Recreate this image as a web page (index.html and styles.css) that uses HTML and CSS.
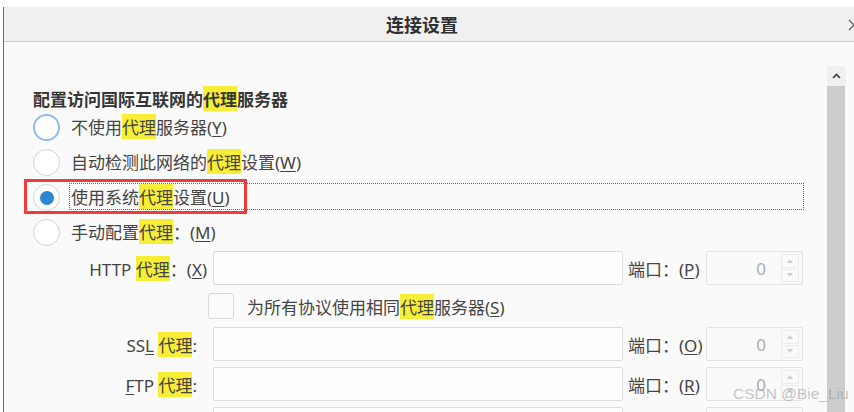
FILE: index.html
```html
<!DOCTYPE html>
<html lang="zh-CN">
<head>
<meta charset="utf-8">
<title>连接设置</title>
<link rel="stylesheet" href="styles.css">
</head>
<body>
<div class="window">
  <div class="titlebar">
    <div class="title">连接设置</div>
    <svg class="close" width="7" height="12" viewBox="0 0 7 12"><path d="M1 1 L6 6 L1 11" fill="none" stroke="#555" stroke-width="1.2"/></svg>
  </div>
  <div class="content">
    <div class="main">
      <div class="heading">配置访问国际互联网的<mark>代理</mark>服务器</div>
      <div class="radio-row">
        <span class="radio radio-focus"></span>
        <span class="rlabel">不使用<mark>代理</mark>服务器(<u>Y</u>)</span>
      </div>
      <div class="radio-row">
        <span class="radio"></span>
        <span class="rlabel">自动检测此网络的<mark>代理</mark>设置(<u>W</u>)</span>
      </div>
      <div class="radio-row">
        <span class="radio checked"></span>
        <span class="rlabel focus-ring">使用系统<mark>代理</mark>设置(<u>U</u>)</span>
        <div class="annot"></div>
      </div>
      <div class="radio-row">
        <span class="radio"></span>
        <span class="rlabel">手动配置<mark>代理</mark>：(<u>M</u>)</span>
      </div>

      <div class="field-row first">
        <span class="flabel">HTTP <mark>代理</mark>：(<u>X</u>)</span>
        <span class="input"></span>
        <span class="plabel">端口：(<u>P</u>)</span>
        <span class="port"><span class="val">0</span><span class="spin"><span class="spin-btn"><svg width="6" height="4" viewBox="0 0 6 4"><path d="M0 4 L3 0 L6 4Z" fill="#cfcfcf"/></svg></span><span class="spin-btn"><svg width="6" height="4" viewBox="0 0 6 4"><path d="M0 0 L3 4 L6 0Z" fill="#cfcfcf"/></svg></span></span></span>
      </div>
      <div class="check-row">
        <span class="checkbox"></span>
        <span class="clabel">为所有协议使用相同<mark>代理</mark>服务器(<u>S</u>)</span>
      </div>
      <div class="field-row">
        <span class="flabel short">SS<u>L</u> <mark>代理</mark>:</span>
        <span class="input"></span>
        <span class="plabel">端口：(<u>O</u>)</span>
        <span class="port"><span class="val">0</span><span class="spin"><span class="spin-btn"><svg width="6" height="4" viewBox="0 0 6 4"><path d="M0 4 L3 0 L6 4Z" fill="#cfcfcf"/></svg></span><span class="spin-btn"><svg width="6" height="4" viewBox="0 0 6 4"><path d="M0 0 L3 4 L6 0Z" fill="#cfcfcf"/></svg></span></span></span>
      </div>
      <div class="field-row">
        <span class="flabel short"><u>F</u>TP <mark>代理</mark>:</span>
        <span class="input"></span>
        <span class="plabel">端口：(<u>R</u>)</span>
        <span class="port"><span class="val">0</span><span class="spin"><span class="spin-btn"><svg width="6" height="4" viewBox="0 0 6 4"><path d="M0 4 L3 0 L6 4Z" fill="#cfcfcf"/></svg></span><span class="spin-btn"><svg width="6" height="4" viewBox="0 0 6 4"><path d="M0 0 L3 4 L6 0Z" fill="#cfcfcf"/></svg></span></span></span>
      </div>
      <div class="field-row">
        <span class="flabel short"></span>
        <span class="input"></span>
        <span class="plabel"></span>
        <span class="port"></span>
      </div>
    </div>
    <div class="scrollbar">
      <div class="sb-up"><svg width="9" height="6" viewBox="0 0 9 6"><path d="M1 5 L4.5 1.5 L8 5" fill="none" stroke="#3c3c3c" stroke-width="1.6"/></svg></div>
      <div class="sb-thumb"></div>
    </div>
  </div>
</div>
<div class="watermark">CSDN @Bie_Liu</div>
</body>
</html>
```
FILE: styles.css
```css
html, body {
  margin: 0;
  height: 412px;
  overflow: hidden;
  background: #ffffff;
}
body {
  font-family: "Noto Sans", "Noto Sans CJK SC", sans-serif;
  color: #444444;
  position: relative;
}
.window {
  margin: 7px 0 0 3px;
  border-left: 1px solid #707070;
  height: 405px;
  display: flex;
  flex-direction: column;
  background: #fafafa;
}
.titlebar {
  height: 34px;
  flex: none;
  background: #f0f0f0;
  border-bottom: 1px solid #cbcbcb;
  display: flex;
  align-items: center;
  overflow: hidden;
}
.title {
  flex: 1;
  text-align: center;
  font-family: "Noto Sans CJK SC", sans-serif;
  font-weight: bold;
  font-size: 18px;
  color: #2f2f2f;
  padding-right: 8px;
}
.close {
  flex: none;
  margin-right: -1px;
  margin-top: 2px;
}
.content {
  flex: 1;
  display: flex;
  min-height: 0;
}
.main {
  width: 823px;
  flex: none;
  box-sizing: border-box;
  padding: 46px 24px 0 29px;
  overflow: hidden;
}
.scrollbar {
  width: 19px;
  flex: none;
  margin-top: 24px;
  display: flex;
  flex-direction: column;
}
.sb-up {
  height: 20px;
  background: #f0f0f0;
  display: flex;
  align-items: center;
  justify-content: center;
}
.sb-thumb {
  flex: 1;
  background: #cdcdcd;
  margin-right: 1px;
}
mark {
  background: #f8ee35;
  color: inherit;
  font-family: "Noto Sans CJK SC", sans-serif;
}
u {
  text-underline-offset: 2px;
  text-decoration-thickness: 1px;
}
.heading {
  font-size: 17px;
  font-weight: bold;
  line-height: 22px;
  color: #363636;
  font-family: "Noto Sans CJK SC", sans-serif;
}
.radio-row {
  height: 35px;
  display: flex;
  align-items: center;
  position: relative;
  font-size: 17px;
}
.radio {
  width: 27px;
  height: 27px;
  box-sizing: border-box;
  border-radius: 50%;
  border: 1px solid #d2d2d2;
  background: #ffffff;
  flex: none;
  margin-right: 10px;
  display: flex;
  align-items: center;
  justify-content: center;
}
.radio-focus {
  border: 2px solid #8cbcf0;
}
.checked::after {
  content: "";
  width: 14px;
  height: 14px;
  border-radius: 50%;
  background: #2b88d0;
}
.rlabel {
  padding-left: 1px;
  line-height: 26px;
  white-space: nowrap;
}
.focus-ring {
  flex: 1;
  height: 25px;
  outline: 1px dotted #6a6a6a;
  outline-offset: 0;
  margin-top: -2px;
}
.annot {
  position: absolute;
  left: -9px;
  top: -1px;
  width: 223px;
  height: 35px;
  box-sizing: border-box;
  border: 3px solid #ee3b3b;
}
.field-row {
  height: 34px;
  display: flex;
  align-items: center;
  margin-bottom: 6px;
  font-size: 17px;
}
.field-row.first {
  margin-top: 1px;
}
.flabel {
  width: 174px;
  flex: none;
  text-align: right;
  white-space: nowrap;
  box-sizing: border-box;
}
.flabel.short {
  padding-right: 10px;
}
.input {
  width: 410px;
  height: 34px;
  flex: none;
  margin-left: 6px;
  box-sizing: border-box;
  border: 1px solid #dddddd;
  border-radius: 2px;
  background: #fdfdfd;
}
.plabel {
  width: 72px;
  flex: none;
  margin: 0 6px 0 5px;
  white-space: nowrap;
}
.port {
  width: 97px;
  height: 34px;
  flex: none;
  box-sizing: border-box;
  border: 1px solid #e2e2e2;
  border-radius: 2px;
  background: #fafafa;
  display: flex;
  align-items: center;
  justify-content: flex-end;
  padding-right: 3px;
}
.val {
  color: #ababab;
  margin-right: 15px;
}
.spin {
  width: 18px;
  height: 28px;
  display: flex;
  flex-direction: column;
  gap: 1px;
}
.spin-btn {
  flex: 1;
  box-sizing: border-box;
  border: 1px solid #ececec;
  display: flex;
  align-items: center;
  justify-content: center;
}
.check-row {
  height: 30px;
  display: flex;
  align-items: center;
  margin-bottom: 6px;
  font-size: 17px;
}
.checkbox {
  width: 26px;
  height: 26px;
  flex: none;
  box-sizing: border-box;
  margin-left: 175px;
  border: 1px solid #d9d9d9;
  border-radius: 3px;
  background: #fbfbfb;
}
.clabel {
  margin-left: 13px;
  white-space: nowrap;
}
.watermark {
  position: absolute;
  left: 733px;
  top: 385px;
  font-family: "Liberation Sans", Arial, sans-serif;
  font-size: 15.5px;
  color: rgba(150, 150, 150, 0.55);
  white-space: nowrap;
}
```
